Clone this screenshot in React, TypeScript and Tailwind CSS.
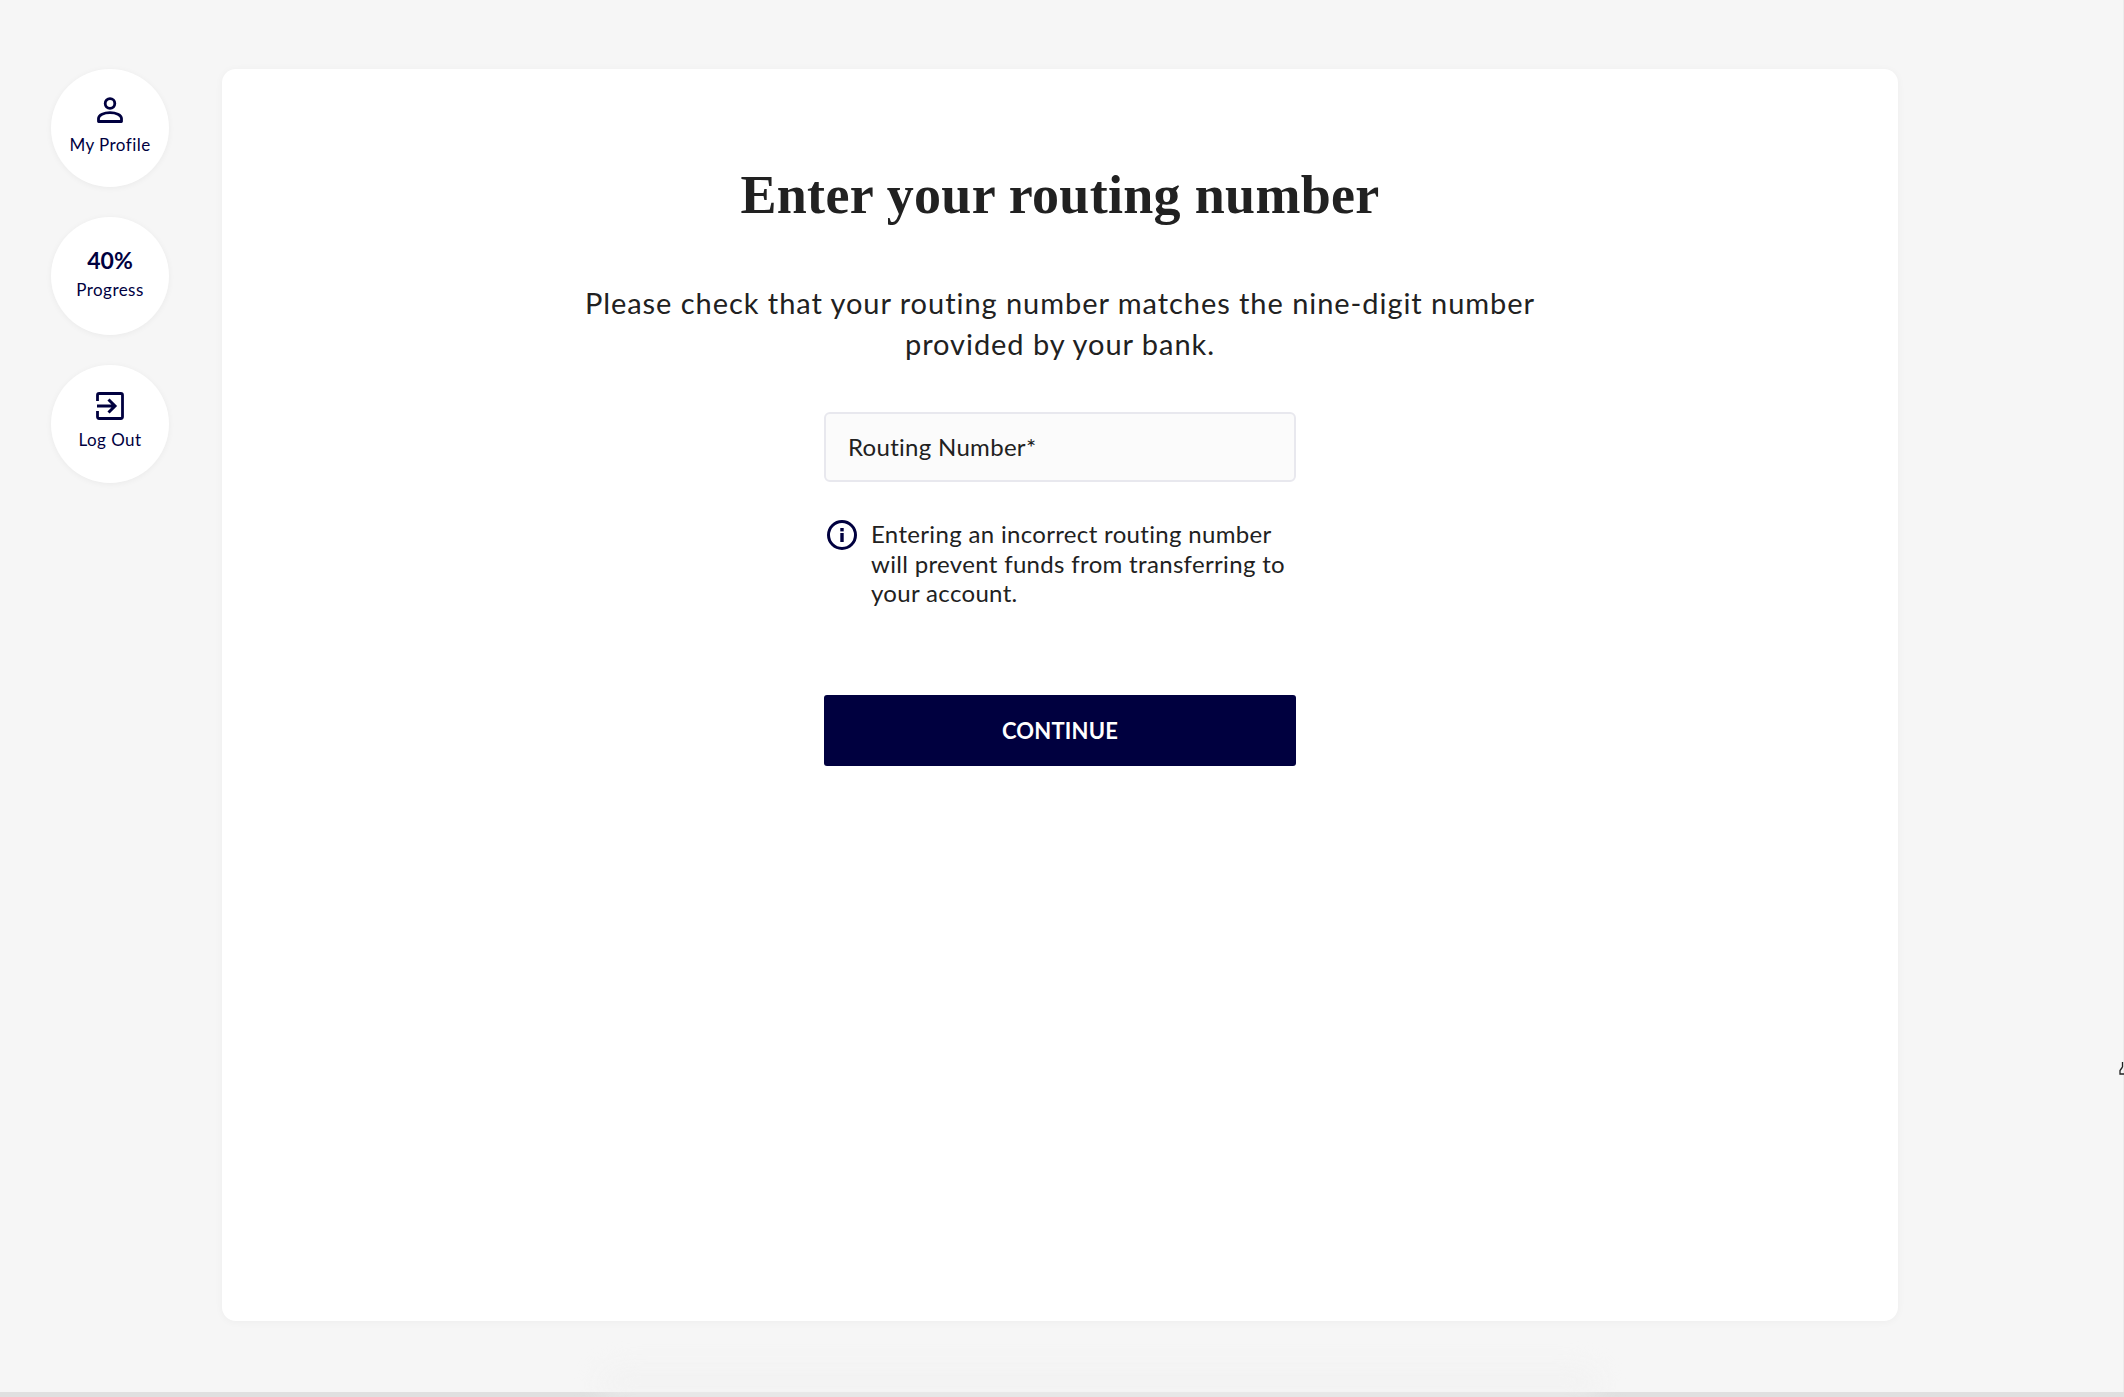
function PersonIcon() {
  return (
    <svg width="26" height="26" viewBox="0 0 26 26" fill="none" stroke="#00003f" strokeWidth="2.800">
      <circle cx="13" cy="6.500" r="4.800" />
      <path d="M1.500 24.500v-3c0-3.800 5.700-5.800 11.500-5.800s11.500 2 11.500 5.800v3z" strokeLinejoin="round" />
    </svg>
  );
}

function LogoutIcon() {
  return (
    <svg width="28" height="28" viewBox="0 0 28 28" fill="none" stroke="#00003f" strokeWidth="2.800">
      <path d="M1.500 9V3.200c0-1 .7-1.700 1.700-1.700h21.600c1 0 1.700.7 1.700 1.700v21.600c0 1-.7 1.700-1.700 1.700H3.200c-1 0-1.700-.7-1.700-1.700V19" />
      <path d="M1 14h17M12.500 7.500 19 14l-6.500 6.500" strokeWidth="3" />
    </svg>
  );
}

function InfoIcon() {
  return (
    <svg width="32" height="32" viewBox="0 0 32 32" fill="none" className="shrink-0">
      <circle cx="16" cy="16" r="13.500" stroke="#00003f" strokeWidth="3" />
      <rect x="14.300" y="14" width="3.400" height="9" fill="#00003f" />
      <rect x="14.300" y="9" width="3.400" height="3.400" fill="#00003f" />
    </svg>
  );
}

function Bubble({ children, label, top, gap }: { children: React.ReactNode; label: string; top: string; gap: string }) {
  return (
    <div className={`flex h-[118px] w-[118px] flex-col items-center rounded-full bg-white ${top} text-[#00003f] shadow-[0_1px_6px_rgba(0,0,0,0.05)]`}>
      <div className="flex h-[28px] items-center justify-center">{children}</div>
      <div className={`${gap} text-[17px] leading-[22px] tracking-[0.45px]`}>{label}</div>
    </div>
  );
}

export default function App() {
  return (
    <div className="relative h-[1397px] w-[2124px] overflow-hidden bg-[#f6f6f6] font-['Lato','Liberation_Sans',sans-serif]">
      <div className="flex h-[1392px] w-[2123px] pt-[69px]">
        <div className="flex w-[222px] shrink-0 flex-col gap-[30px] pl-[51px]">
          <Bubble label="My Profile" top="pt-[27px]" gap="mt-[10px]"><PersonIcon /></Bubble>
          <Bubble label="Progress" top="pt-[29px]" gap="mt-[5px]"><span className="text-[23px] font-bold leading-[28px]">40%</span></Bubble>
          <Bubble label="Log Out" top="pt-[27px]" gap="mt-[9px]"><LogoutIcon /></Bubble>
        </div>
        <main className="flex h-[1252px] w-[1676px] flex-col items-center rounded-[14px] bg-white pt-[96px] shadow-[0_1px_8px_rgba(0,0,0,0.04)]">
          <h1 className="text-[54px] font-bold leading-[60px] tracking-[0.3px] text-[#212121] font-['Liberation_Serif',serif]">Enter your routing number</h1>
          <p className="mt-[57px] w-[1000px] text-center text-[29px] leading-[41px] tracking-[0.95px] text-[#212121]">
            Please check that your routing number matches the nine-digit number
            <br />
            provided by your bank.
          </p>
          <div className="mt-[48px] flex h-[70px] w-[472px] items-center rounded-[6px] border-2 border-[#e8e8ee] bg-[#fbfbfb] pl-[22px] text-[24px] tracking-[0.3px] text-[#212121]">
            Routing Number*
          </div>
          <div className="mt-[37px] flex w-[472px] gap-[13px] pl-[2px]">
            <InfoIcon />
            <p className="text-[24px] leading-[29.500px] tracking-[0.33px] text-[#212121]">
              Entering an incorrect routing number will prevent funds from transferring to your account.
            </p>
          </div>
          <button className="mt-[87px] flex h-[71px] w-[472px] items-center justify-center rounded-[3px] bg-[#00003f] text-[22px] font-bold tracking-[0.2px] text-white">
            CONTINUE
          </button>
        </main>
      </div>
      <div className="h-[5px] w-full bg-[#e0e0e0]" />
      <div className="absolute bottom-[5px] left-[600px] h-[22px] w-[1000px] rounded-t-[40px] bg-[#f1f1f1] blur-[12px]" />
      <div className="absolute right-0 top-0 h-[1392px] w-px bg-[#ececec]" />
      <svg className="absolute left-[2119px] top-[1061px]" width="5" height="15" viewBox="0 0 5 15" fill="none" stroke="#222" strokeWidth="1.300">
        <path d="M3.500 1v5M3.500 6 1 9.500v3.500h4" />
      </svg>
    </div>
  );
}
